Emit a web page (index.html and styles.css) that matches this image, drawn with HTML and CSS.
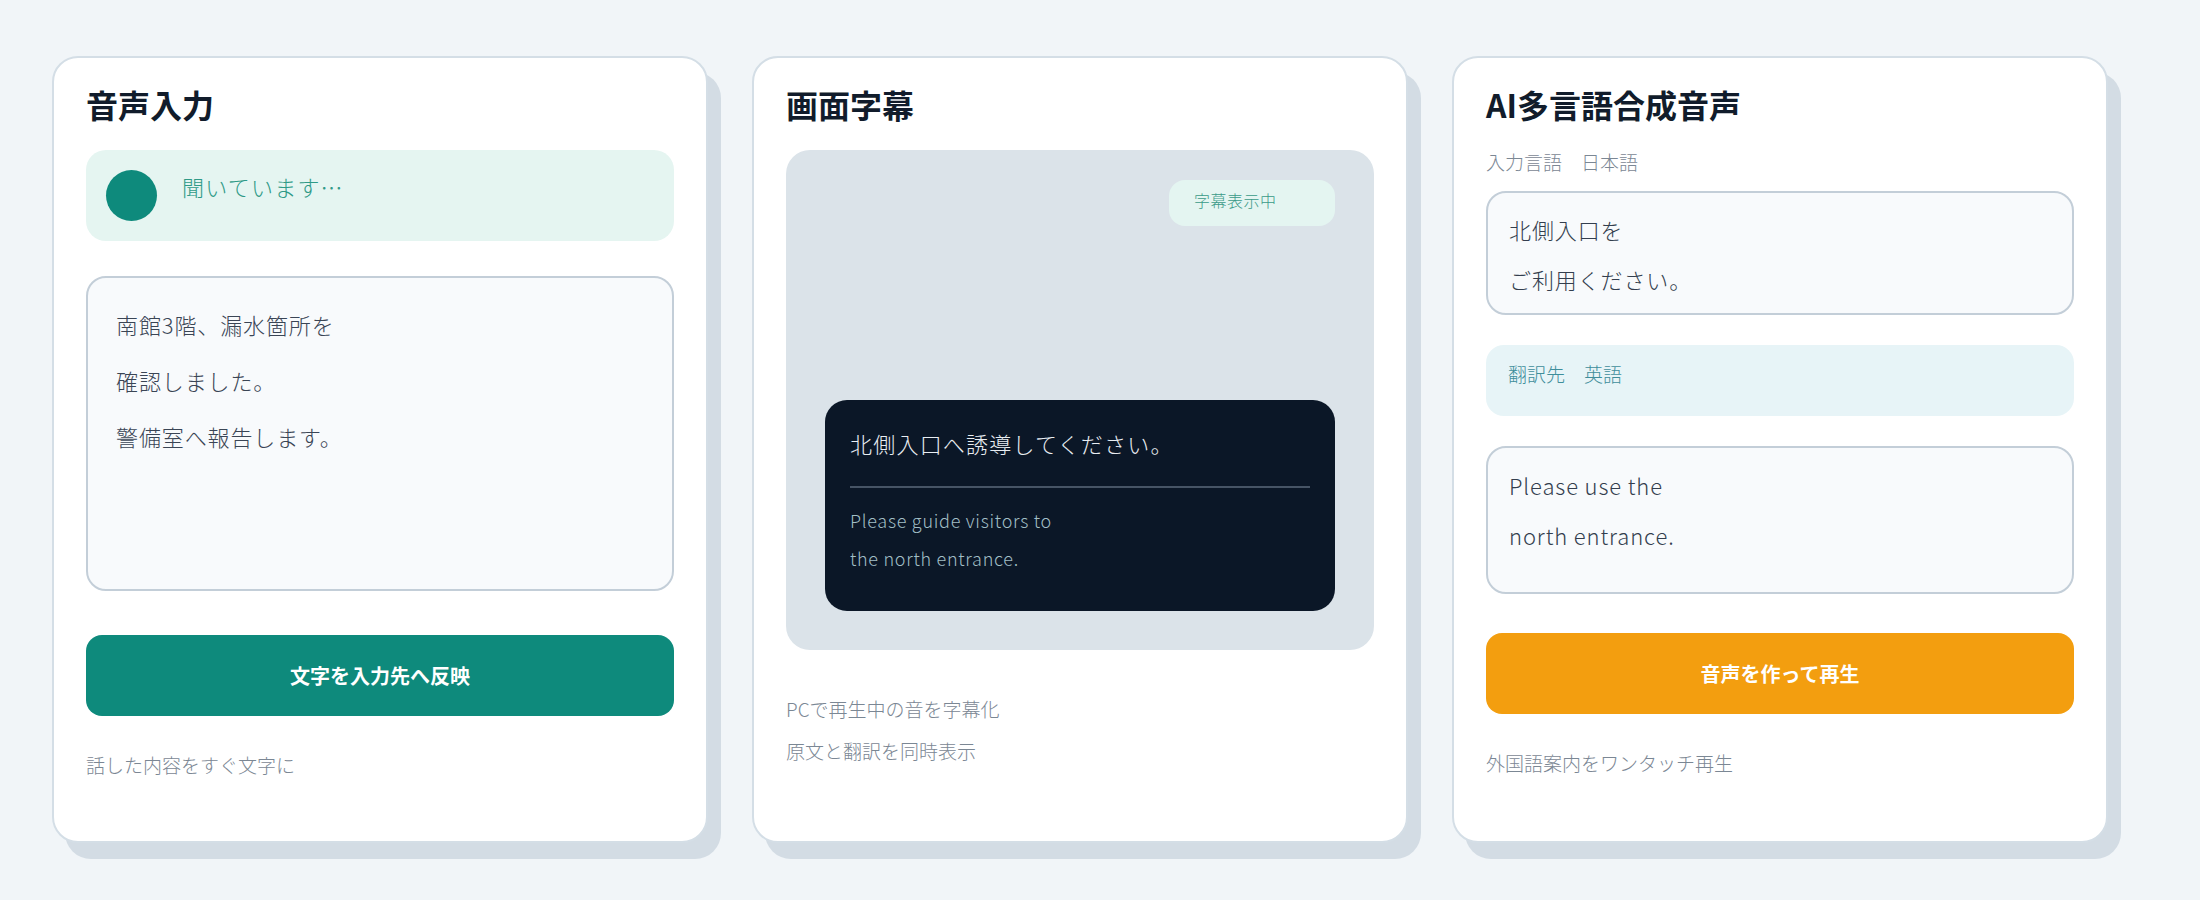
FILE: index.html
```html
<!DOCTYPE html>
<html lang="ja">
<head>
<meta charset="utf-8">
<title>音声ツール</title>
<link rel="stylesheet" href="styles.css">
</head>
<body>
<main class="board">
  <section class="card">
    <h2 class="card-title">音声入力</h2>
    <div class="status">
      <span class="status-dot"></span>
      <span class="status-text">聞いています…</span>
    </div>
    <div class="transcript">
      <p>南館3階、漏水箇所を</p>
      <p>確認しました。</p>
      <p>警備室へ報告します。</p>
    </div>
    <button class="btn btn-teal">文字を入力先へ反映</button>
    <p class="note note-first">話した内容をすぐ文字に</p>
  </section>

  <section class="card">
    <h2 class="card-title">画面字幕</h2>
    <div class="stage">
      <span class="badge">字幕表示中</span>
      <div class="subtitle">
        <p class="subtitle-jp">北側入口へ誘導してください。</p>
        <div class="subtitle-rule"></div>
        <p class="subtitle-en">Please guide visitors to<br>the north entrance.</p>
      </div>
    </div>
    <div class="notes">
      <p class="note">PCで再生中の音を字幕化</p>
      <p class="note">原文と翻訳を同時表示</p>
    </div>
  </section>

  <section class="card">
    <h2 class="card-title">AI多言語合成音声</h2>
    <p class="lang-label">入力言語　日本語</p>
    <div class="field field-src">
      <p>北側入口を</p>
      <p>ご利用ください。</p>
    </div>
    <div class="target">翻訳先　英語</div>
    <div class="field field-out">
      <p>Please use the</p>
      <p>north entrance.</p>
    </div>
    <button class="btn btn-orange btn-out">音声を作って再生</button>
    <p class="note note-first">外国語案内をワンタッチ再生</p>
  </section>
</main>
</body>
</html>
```

FILE: styles.css
```css
* {
  box-sizing: border-box;
}

html,
body {
  min-height: 100%;
}

body {
  margin: 0;
  background: #f1f5f8;
  font-family: "Noto Sans CJK JP", "Noto Sans", sans-serif;
  font-weight: 300;
  color: #3a4555;
}

p {
  margin: 0;
}

.board {
  display: flex;
  gap: 44px;
  padding: 56px 0 40px 52px;
}

.card {
  width: 656px;
  height: 787px;
  background: #ffffff;
  border: 2px solid #d4dee6;
  border-radius: 26px;
  box-shadow: 13px 16px 0 #d3dce4;
  padding: 27px 32px 30px;
  display: flex;
  flex-direction: column;
}

.card-title {
  margin: 0;
  font-size: 32px;
  line-height: 38px;
  font-weight: 700;
  color: #111c2b;
}

/* card 1 */
.status {
  margin-top: 27px;
  height: 91px;
  background: #e5f5f1;
  border-radius: 20px;
  padding: 18px 20px 20px;
  display: flex;
  align-items: flex-start;
  gap: 25px;
}

.status-dot {
  width: 51px;
  height: 51px;
  margin-top: 2px;
  border-radius: 50%;
  background: #0e8a7c;
  flex: none;
}

.status-text {
  font-size: 22px;
  line-height: 36px;
  letter-spacing: 0.055em;
  color: #2f9a87;
}

.transcript {
  margin-top: 35px;
  height: 315px;
  border: 2px solid #c3ced8;
  border-radius: 20px;
  background: #f8fafc;
  padding: 18px 28px;
  font-size: 22px;
  line-height: 56px;
  letter-spacing: 0.04em;
  color: #3a4555;
}

.btn {
  display: block;
  width: 100%;
  height: 81px;
  border: none;
  border-radius: 16px;
  font-family: inherit;
  font-size: 20px;
  font-weight: 700;
  color: #ffffff;
}

.btn-teal {
  margin-top: 44px;
  background: #0e8a7c;
}

.btn-orange {
  background: #f39e0f;
}

.btn-out {
  margin-top: 39px;
}

.note {
  font-size: 19px;
  line-height: 28px;
  color: #7b8794;
}

.note-first {
  margin-top: 35px;
}

/* card 2 */
.stage {
  margin-top: 27px;
  height: 500px;
  background: #dbe3e9;
  border-radius: 24px;
  padding: 30px 39px 39px;
  display: flex;
  flex-direction: column;
}

.badge {
  align-self: flex-end;
  width: 166px;
  height: 46px;
  padding: 10px 25px;
  border-radius: 16px;
  background: #e4f5f1;
  color: #3a9a88;
  font-size: 16px;
  line-height: 20px;
  letter-spacing: 0.03em;
}

.subtitle {
  margin-top: auto;
  background: #0b1727;
  border-radius: 22px;
  padding: 26px 25px 34px;
}

.subtitle-jp {
  font-size: 22px;
  line-height: 34px;
  letter-spacing: 0.055em;
  color: #e8edf2;
}

.subtitle-rule {
  margin-top: 26px;
  height: 2px;
  background: #465465;
}

.subtitle-en {
  margin-top: 13px;
  font-size: 18px;
  line-height: 38px;
  letter-spacing: 0.04em;
  color: #a2bfc6;
}

.notes {
  margin-top: 45px;
  display: flex;
  flex-direction: column;
  gap: 14px;
}

/* card 3 */
.lang-label {
  margin-top: 25px;
  font-size: 19px;
  line-height: 28px;
  color: #7b8794;
}

.field {
  border: 2px solid #c3ced8;
  border-radius: 20px;
  background: #f8fafc;
  font-size: 22px;
  line-height: 50px;
  letter-spacing: 0.04em;
  color: #333e4e;
  padding-left: 21px;
}

.field-src {
  margin-top: 15px;
  height: 124px;
  padding-top: 11px;
}

.target {
  margin-top: 30px;
  height: 71px;
  border-radius: 18px;
  background: #e7f4f7;
  padding: 15px 22px;
  font-size: 19px;
  line-height: 28px;
  color: #3f8e9b;
}

.field-out {
  margin-top: 30px;
  height: 148px;
  padding-top: 12px;
}
```
